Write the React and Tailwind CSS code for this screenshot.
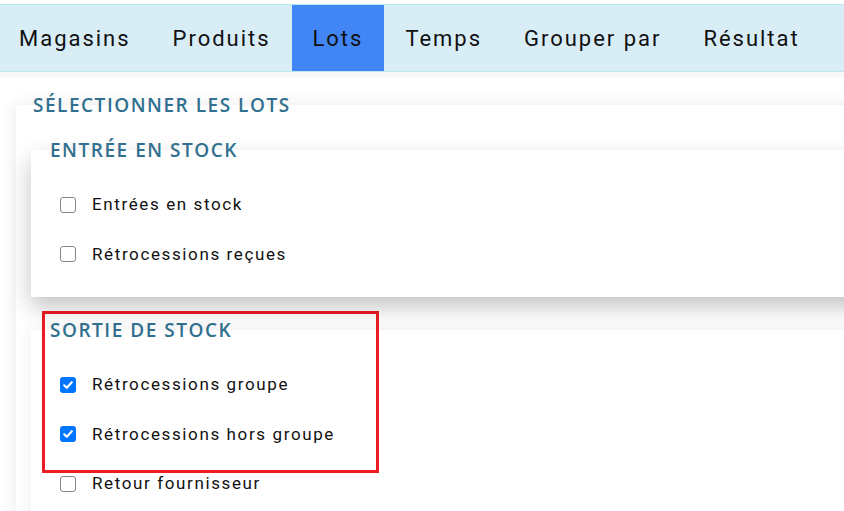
const tabs = ["Magasins", "Produits", "Lots", "Temps", "Grouper par", "Résultat"];

function Check({ checked }) {
    if (checked) {
        return (
            <span className="w-[16px] h-[16px] rounded-[3px] bg-[#0075ff] flex items-center justify-center shrink-0">
                <svg width="12" height="12" viewBox="0 0 12 12">
                    <path d="M2.2 6.3 L4.8 8.8 L9.8 3.2" fill="none" stroke="white" strokeWidth="2.2" strokeLinecap="round" strokeLinejoin="round" />
                </svg>
            </span>
        );
    }
    return <span className="w-[16px] h-[16px] rounded-[3px] border border-[#858585] bg-white shrink-0" />;
}

function Row({ label, checked }) {
    return (
        <div className="h-[49.5px] flex items-center pl-[11px]">
            <Check checked={checked} />
            <span className="ml-[16px] text-[17px] tracking-[0.095em] text-[#111]">{label}</span>
        </div>
    );
}

function Heading({ children }) {
    return (
        <legend className="px-[2px] leading-[20px] text-[19px] font-semibold tracking-[0.08em] text-[#31708f] font-['Open_Sans',sans-serif]">
            {children}
        </legend>
    );
}

export default function App() {
    return (
        <div className="relative h-[511px] w-[844px] overflow-hidden bg-white font-['Roboto',sans-serif]">
            <nav className="mt-[4px] flex border-y border-[#bce8f1] bg-[#d9edf7]">
                {tabs.map((t, i) => (
                    <div
                        key={t}
                        className={
                            (t === "Lots" ? "bg-[#4285f4] " : "") +
                            (i === 0 ? "pl-[19px] " : "pl-[21px] ") +
                            "h-[66px] flex items-center pr-[21px] text-[22px] tracking-[0.09em] text-[#111]"
                        }
                    >
                        {t}
                    </div>
                ))}
            </nav>
            <div className="h-[6px] bg-[#f8f8f8]" />

            <fieldset className="mt-[17px] ml-[16px] w-[900px] pl-[15px] bg-white shadow-[0_0_16px_rgba(0,0,0,0.09)]">
                <Heading>SÉLECTIONNER LES LOTS</Heading>

                <fieldset className="relative z-10 mt-[25px] pl-[17px] pt-[20px] pb-[18px] bg-white shadow-[0_10px_22px_rgba(0,0,0,0.24)]">
                    <Heading>ENTRÉE EN STOCK</Heading>
                    <div className="pl-[1px]">
                        <Row label="Entrées en stock" />
                        <Row label="Rétrocessions reçues" />
                    </div>
                </fieldset>

                <fieldset className="mt-[23px] pl-[17px] pt-[20px] pb-[30px] bg-white shadow-[0_0_14px_rgba(0,0,0,0.08)]">
                    <Heading>SORTIE DE STOCK</Heading>
                    <div className="pl-[1px]">
                        <Row label="Rétrocessions groupe" checked />
                        <Row label="Rétrocessions hors groupe" checked />
                        <Row label="Retour fournisseur" />
                    </div>
                </fieldset>
            </fieldset>

            <div className="absolute left-[42px] top-[311px] w-[337px] h-[162px] border-[3px] border-[#ed1c24]" />
        </div>
    );
}
